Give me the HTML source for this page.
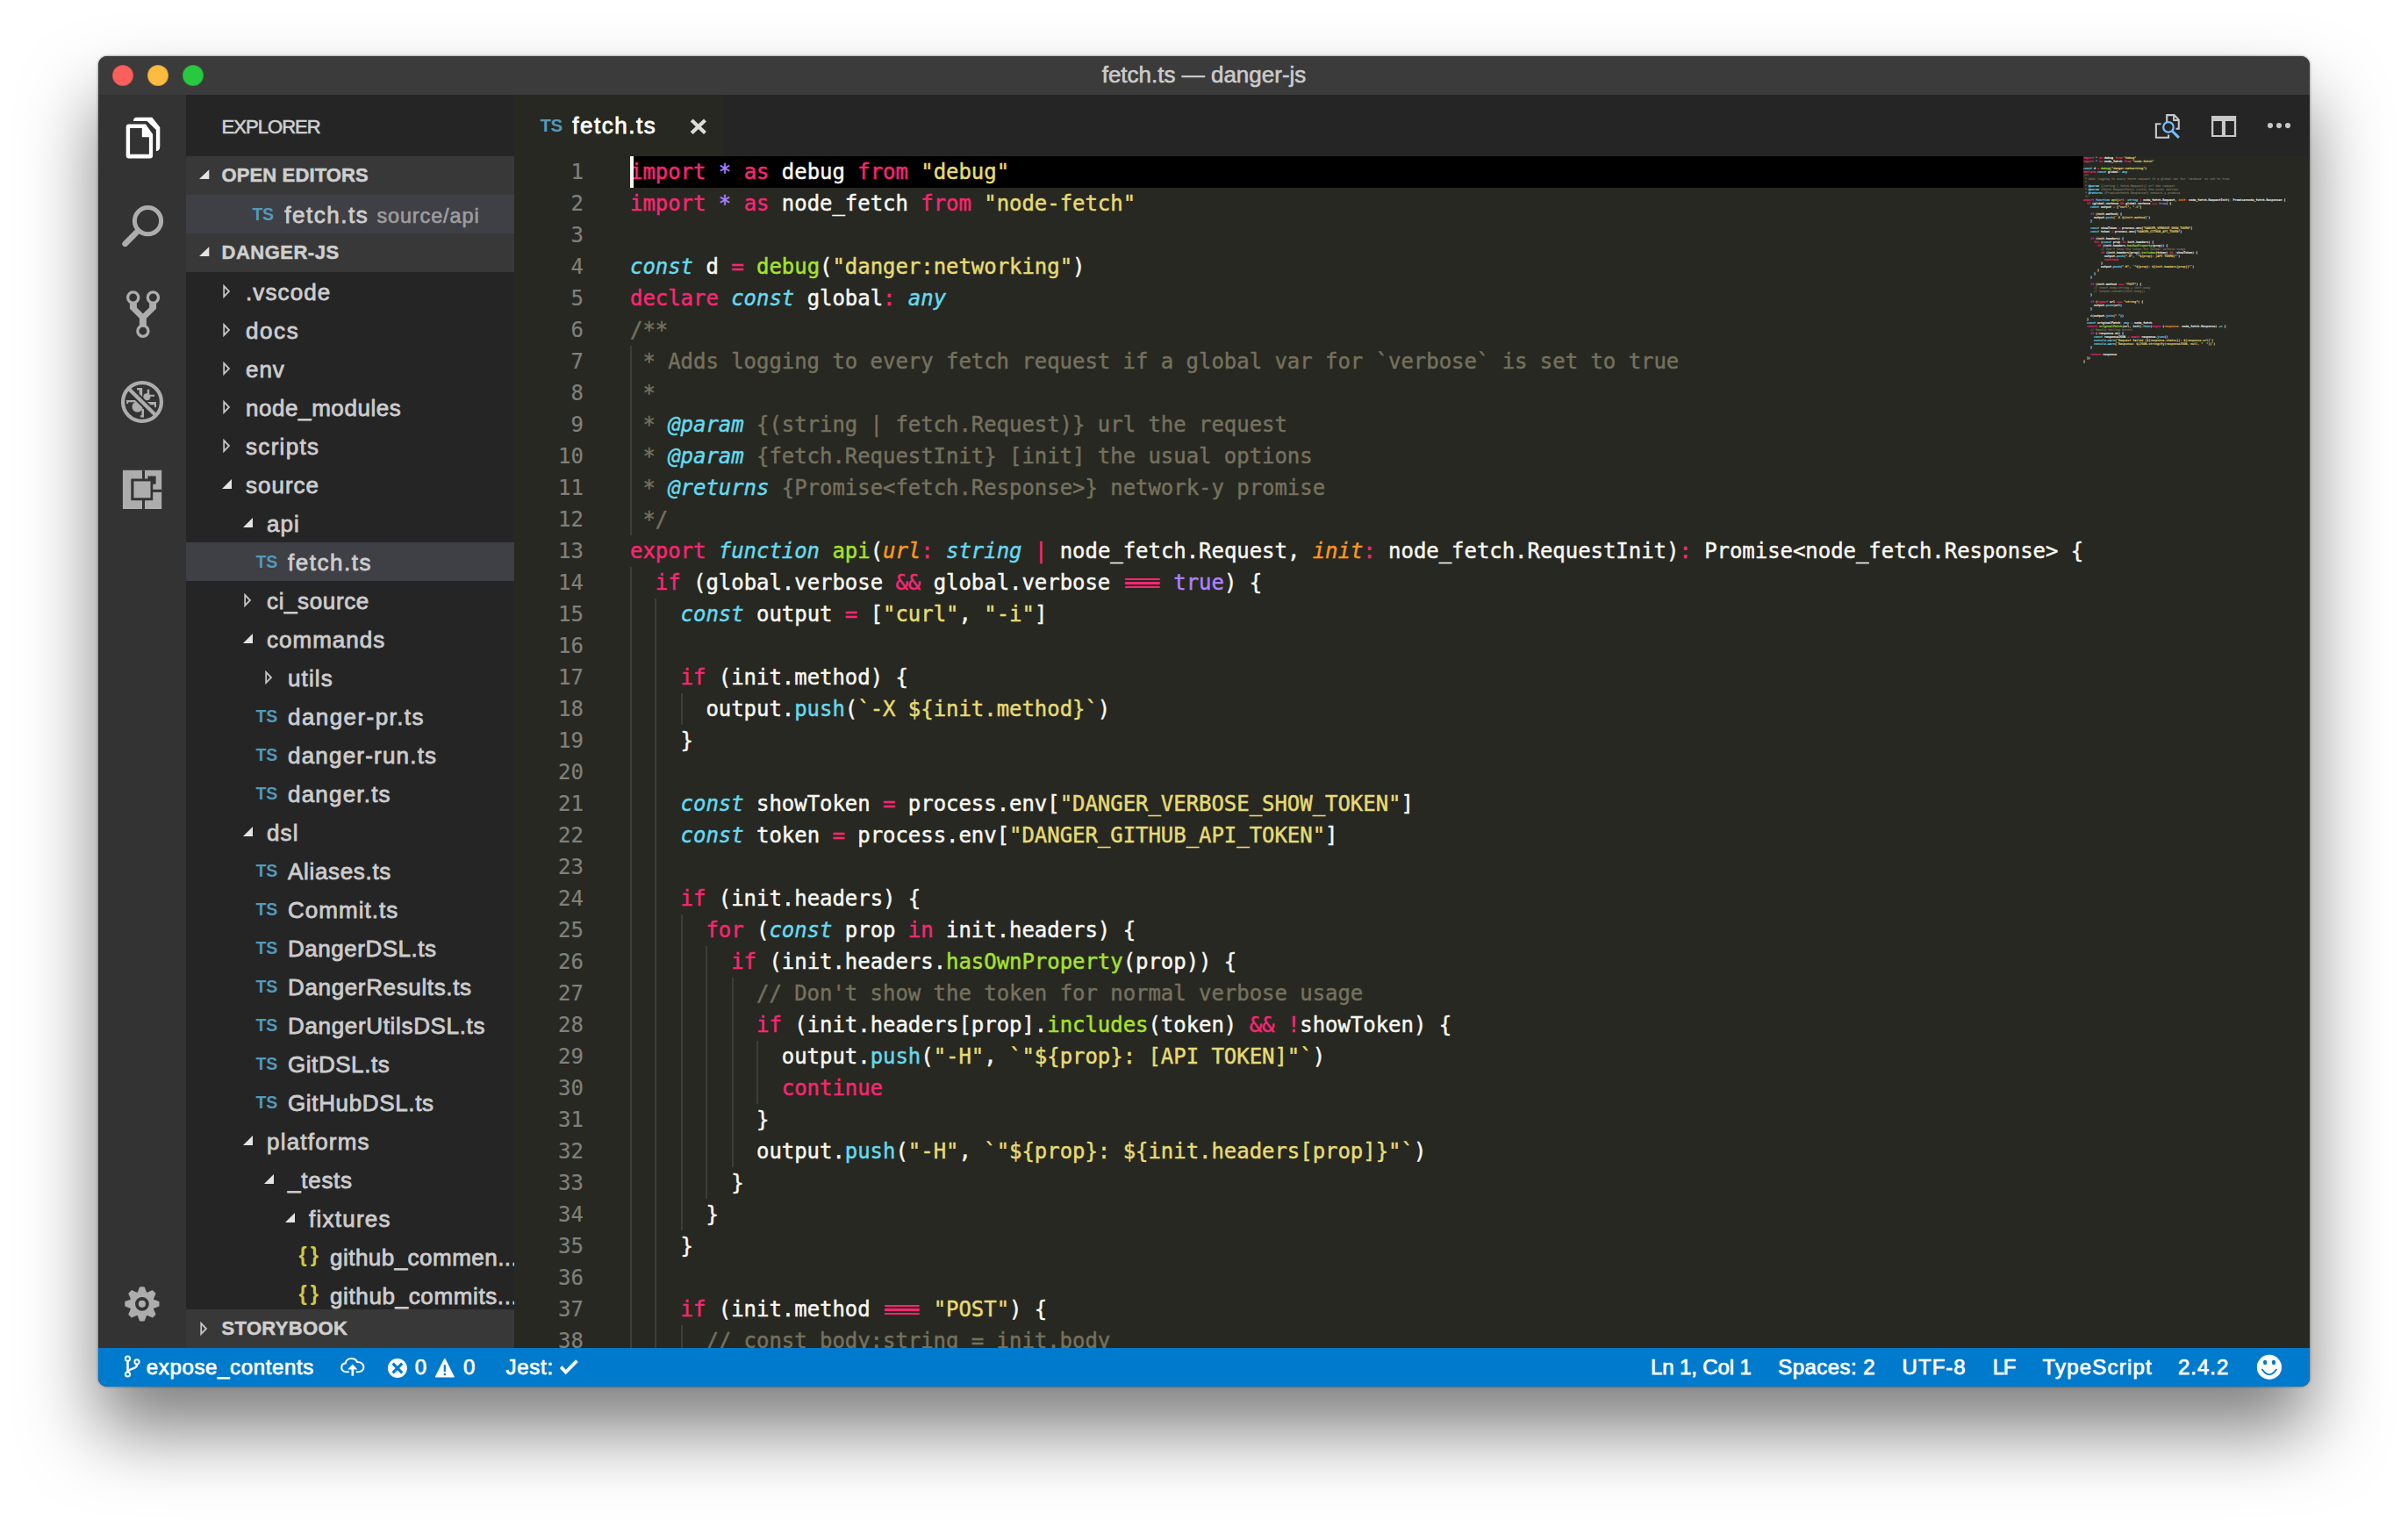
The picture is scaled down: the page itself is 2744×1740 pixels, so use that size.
<!DOCTYPE html>
<html lang="en"><head><meta charset="utf-8"><title>fetch.ts — danger-js</title>
<style>
html,body{margin:0;padding:0}
body{width:2744px;height:1740px;background:#fff;overflow:hidden;position:relative;font-family:"Liberation Sans",sans-serif;}
#win{position:absolute;left:112px;top:64px;width:2520px;height:1516px;border-radius:10px;overflow:hidden;background:#272822;
 box-shadow:0 50px 84px rgba(0,0,0,.5),0 0 3px rgba(0,0,0,.55);}
#win div,#win span,#win svg{position:absolute}
#title{left:0;top:0;width:2520px;height:44px;background:#3b3b3b}
#title .tt{-webkit-text-stroke:.6px;left:0;width:2520px;top:0;text-align:center;font-size:26px;line-height:42px;color:#cbcbcb;white-space:pre}
.tl{width:24px;height:24px;border-radius:50%;top:10px;box-shadow:inset 0 0 0 1px rgba(0,0,0,.14)}
#act{left:0;top:44px;width:100px;height:1428px;background:#333333}
#side{left:100px;top:44px;width:374px;height:1428px;background:#252526;overflow:hidden}
#ed{left:474px;top:44px;width:2046px;height:1428px;background:#272822;overflow:hidden}
#status{-webkit-text-stroke:.75px;left:0;top:1472px;width:2520px;height:44px;background:#007acc;color:#fff;font-size:24px;line-height:44px;white-space:pre}
.hdr{left:0;width:374px;height:44px;background:#383838}
.hdr .l{-webkit-text-stroke:.5px;left:40.5px;top:0;font-weight:700;font-size:22px;line-height:43px;color:#cfcfcf;white-space:pre}
.row{left:0;width:374px;height:44px}
.row .l{-webkit-text-stroke:.8px;top:0;font-size:26px;line-height:46px;color:#cccccc;white-space:pre}
.row .d{-webkit-text-stroke:.7px;top:0;font-size:23.4px;line-height:49px;color:#9c9c9c;white-space:pre}
.sel{background:#3f3f46}
.ts{font-weight:700;color:#519aba;font-size:19.5px;line-height:45px;top:0;white-space:pre;letter-spacing:-.2px}
.js{color:#cbcb41;font-size:23.5px;line-height:41px;top:0;white-space:pre;font-weight:700;letter-spacing:4px}
#tabs{left:0;top:0;width:2046px;height:70px;background:#252526}
#tab{left:0;top:0;width:238px;height:70px;background:#272822}
#tab .l{-webkit-text-stroke:.8px;left:66.3px;top:0;font-size:26px;line-height:70px;color:#fff;white-space:pre}
#code{-webkit-text-stroke:.45px;left:0;top:70px;width:2046px;height:1358px;font-family:"DejaVu Sans Mono","Liberation Mono",monospace;font-size:24px;line-height:36px;color:#f8f8f2}
.ln{-webkit-text-stroke:.2px;left:0;width:79px;text-align:right;color:#80807a;height:36px;white-space:pre}
.cl{left:132px;height:36px;white-space:pre;letter-spacing:-.0487px}
.g{width:2px;height:36px;background:#3e3d36}
.k{color:#f92672}.s{color:#e6db74}.f{color:#a6e22e}.t{color:#66d9ef;font-style:italic}.c{color:#66d9ef}
.p{color:#fd971f;font-style:italic}.n{color:#ae81ff}.m{color:#75715e}
#code span{position:static}
#code .q{display:inline-block;width:43.2px;text-align:center;letter-spacing:-4.2px;text-indent:-4.2px;transform:translateY(-2.3px) scaleX(1.2);text-shadow:0 4.7px 0 #f92672;-webkit-text-stroke:0}
#mini{left:1788px;top:70px;width:240px;font-family:"DejaVu Sans Mono","Liberation Mono",monospace;font-size:3.33px;line-height:4px;color:#f8f8f2;letter-spacing:0;-webkit-text-stroke:.15px}
#mini div{position:static;height:4px;white-space:pre}
#mini span{position:static}
#status span{top:0}
</style></head>
<body>
<div id="win">
<div id="title"><div class="tl" style="left:16px;background:#fc605c"></div><div class="tl" style="left:56px;background:#fdbc40"></div><div class="tl" style="left:96px;background:#28c940"></div><div class="tt" style="">fetch.ts — danger-js</div></div>
<div id="act">
<svg style="left:0;top:0" width="100" height="1428" viewBox="112 108 100 1428">
<path fill="#fff" d="M152 138 Q152 133.8 156.2 133.8 L173.3 133.8 L182.3 145 L182.3 166.5 Q182.3 172.2 177.9 172.2 L177.9 148.1 L167.6 138 Z"/>
<path fill="#fff" fill-rule="evenodd" d="M146.9 141.6 L166 141.6 L174.1 152.9 L174.1 177.2 Q174.1 180.4 170.9 180.4 L146.9 180.4 Q143.7 180.4 143.7 177.2 L143.7 144.8 Q143.7 141.6 146.9 141.6 Z M148.1 146 L161.8 146 L161.8 156.3 L169.9 156.3 L169.9 175.8 L148.1 175.8 Z"/>
<circle cx="168.5" cy="251.7" r="15.1" fill="none" stroke="#adadad" stroke-width="5"/>
<path d="M157.2 263.2 L142.6 277.8" stroke="#adadad" stroke-width="6.6" stroke-linecap="round"/>
<circle cx="151.7" cy="339" r="6.1" fill="none" stroke="#adadad" stroke-width="3.3"/>
<circle cx="174.4" cy="339" r="6.1" fill="none" stroke="#adadad" stroke-width="3.3"/>
<circle cx="162.9" cy="377.2" r="6.1" fill="none" stroke="#adadad" stroke-width="3.3"/>
<path fill="#adadad" d="M147.9 344.6 L155.9 344.6 L155.9 350.5 L162.9 357.5 L170.1 350.5 L170.1 344.6 L178.1 344.6 L178.1 351.7 L166.9 362.8 L166.9 371.6 L158.9 371.6 L158.9 362.8 L147.9 351.7 Z"/>
<circle cx="162" cy="458" r="21.95" fill="none" stroke="#adadad" stroke-width="4.2"/>
<g fill="#adadad" stroke="none"><circle cx="156.6" cy="463.6" r="6.1"/><circle cx="167.3" cy="452.3" r="4"/><rect x="144.2" y="456" width="12" height="2.3"/><rect x="144.2" y="456" width="2" height="4"/><rect x="161.4" y="466" width="2.6" height="9.4"/><rect x="159.9" y="473.2" width="4" height="2.2"/><rect x="158.6" y="442" width="3.6" height="10"/><rect x="156" y="442" width="4" height="2.4"/><rect x="167.8" y="443.7" width="2.4" height="6"/><rect x="170" y="449.8" width="6" height="2"/><rect x="168" y="458" width="10" height="3.4"/><rect x="176" y="458" width="2" height="6.2"/></g>
<path d="M149.2 445.4 L174.8 470.6" stroke="#333" stroke-width="8.4"/>
<path d="M146 442.2 L178 473.8" stroke="#adadad" stroke-width="4.2"/>
<rect x="139.9" y="535.8" width="44.3" height="44.2" fill="#adadad"/>
<g fill="#333"><rect x="162" y="535.8" width="3" height="10"/><rect x="162" y="570" width="3" height="10"/><rect x="174" y="557.8" width="10.3" height="3"/><rect x="149.3" y="545.5" width="24.9" height="24.7"/><rect x="168.5" y="542.5" width="9.1" height="9.2"/></g>
<rect x="152.4" y="548.4" width="19.1" height="18.9" fill="#adadad"/>
<path fill="#adadad" stroke="#adadad" stroke-width="2" stroke-linejoin="round" d="M157.65 1473.14 L159.85 1467.26 L163.95 1467.26 L166.15 1473.14 L167.88 1473.86 L173.59 1471.26 L176.49 1474.16 L173.89 1479.87 L174.61 1481.60 L180.49 1483.80 L180.49 1487.90 L174.61 1490.10 L173.89 1491.83 L176.49 1497.54 L173.59 1500.44 L167.88 1497.84 L166.15 1498.56 L163.95 1504.44 L159.85 1504.44 L157.65 1498.56 L155.92 1497.84 L150.21 1500.44 L147.31 1497.54 L149.91 1491.83 L149.19 1490.10 L143.31 1487.90 L143.31 1483.80 L149.19 1481.60 L149.91 1479.87 L147.31 1474.16 L150.21 1471.26 L155.92 1473.86Z"/>
<circle cx="161.9" cy="1485.85" r="6" fill="none" stroke="#333" stroke-width="3.8"/>
</svg>
</div>
<div id="side">
<span style="-webkit-text-stroke:.6px;left:40.5px;top:0;font-size:22px;line-height:73px;color:#cfcfcf;white-space:pre;letter-spacing:-0.947px;">EXPLORER</span>
<div class="hdr" style="top:70px"><svg style="left:14px;top:14px" width="14" height="14" viewBox="0 0 14 14"><path d="M12.3 1.3 L12.3 12 L1 12 Z" fill="#e4e4e4"/></svg><span class="l" style="letter-spacing:0.131px;">OPEN EDITORS</span></div>
<div class="row sel" style="top:114px"><span class="ts" style="left:75.4px">TS</span><span class="l" style="left:112.3px;letter-spacing:1.525px;">fetch.ts</span><span class="d" style="left:217.4px;letter-spacing:0.92px;">source/api</span></div>
<div class="hdr" style="top:158px"><svg style="left:14px;top:14px" width="14" height="14" viewBox="0 0 14 14"><path d="M12.3 1.3 L12.3 12 L1 12 Z" fill="#e4e4e4"/></svg><span class="l" style="letter-spacing:0.503px;">DANGER-JS</span></div>
<div class="row" style="top:202px"><svg style="left:40px;top:12px" width="14" height="20" viewBox="0 0 14 20"><path d="M3.2 4 L9 10 L3.2 16 Z" fill="none" stroke="#c4c4c4" stroke-width="1.8" stroke-linejoin="miter"/></svg><span class="l" style="left:68px;letter-spacing:1.115px;">.vscode</span></div>
<div class="row" style="top:246px"><svg style="left:40px;top:12px" width="14" height="20" viewBox="0 0 14 20"><path d="M3.2 4 L9 10 L3.2 16 Z" fill="none" stroke="#c4c4c4" stroke-width="1.8" stroke-linejoin="miter"/></svg><span class="l" style="left:68px;letter-spacing:1.593px;">docs</span></div>
<div class="row" style="top:290px"><svg style="left:40px;top:12px" width="14" height="20" viewBox="0 0 14 20"><path d="M3.2 4 L9 10 L3.2 16 Z" fill="none" stroke="#c4c4c4" stroke-width="1.8" stroke-linejoin="miter"/></svg><span class="l" style="left:68px;letter-spacing:0.939px;">env</span></div>
<div class="row" style="top:334px"><svg style="left:40px;top:12px" width="14" height="20" viewBox="0 0 14 20"><path d="M3.2 4 L9 10 L3.2 16 Z" fill="none" stroke="#c4c4c4" stroke-width="1.8" stroke-linejoin="miter"/></svg><span class="l" style="left:68px;letter-spacing:0.566px;">node_modules</span></div>
<div class="row" style="top:378px"><svg style="left:40px;top:12px" width="14" height="20" viewBox="0 0 14 20"><path d="M3.2 4 L9 10 L3.2 16 Z" fill="none" stroke="#c4c4c4" stroke-width="1.8" stroke-linejoin="miter"/></svg><span class="l" style="left:68px;letter-spacing:1.313px;">scripts</span></div>
<div class="row" style="top:422px"><svg style="left:40px;top:12px" width="14" height="20" viewBox="0 0 14 20"><path d="M12 4 L12 15 L1 15 Z" fill="#e4e4e4"/></svg><span class="l" style="left:68px;letter-spacing:0.991px;">source</span></div>
<div class="row" style="top:466px"><svg style="left:64px;top:12px" width="14" height="20" viewBox="0 0 14 20"><path d="M12 4 L12 15 L1 15 Z" fill="#e4e4e4"/></svg><span class="l" style="left:92px;letter-spacing:0.998px;">api</span></div>
<div class="row sel" style="top:510px"><span class="ts" style="left:79.6px">TS</span><span class="l" style="left:116px;letter-spacing:1.525px;">fetch.ts</span></div>
<div class="row" style="top:554px"><svg style="left:64px;top:12px" width="14" height="20" viewBox="0 0 14 20"><path d="M3.2 4 L9 10 L3.2 16 Z" fill="none" stroke="#c4c4c4" stroke-width="1.8" stroke-linejoin="miter"/></svg><span class="l" style="left:92px;letter-spacing:0.627px;">ci_source</span></div>
<div class="row" style="top:598px"><svg style="left:64px;top:12px" width="14" height="20" viewBox="0 0 14 20"><path d="M12 4 L12 15 L1 15 Z" fill="#e4e4e4"/></svg><span class="l" style="left:92px;letter-spacing:1.021px;">commands</span></div>
<div class="row" style="top:642px"><svg style="left:88px;top:12px" width="14" height="20" viewBox="0 0 14 20"><path d="M3.2 4 L9 10 L3.2 16 Z" fill="none" stroke="#c4c4c4" stroke-width="1.8" stroke-linejoin="miter"/></svg><span class="l" style="left:116px;letter-spacing:1.112px;">utils</span></div>
<div class="row" style="top:686px"><span class="ts" style="left:79.6px">TS</span><span class="l" style="left:116px;letter-spacing:1.432px;">danger-pr.ts</span></div>
<div class="row" style="top:730px"><span class="ts" style="left:79.6px">TS</span><span class="l" style="left:116px;letter-spacing:1.204px;">danger-run.ts</span></div>
<div class="row" style="top:774px"><span class="ts" style="left:79.6px">TS</span><span class="l" style="left:116px;letter-spacing:1.202px;">danger.ts</span></div>
<div class="row" style="top:818px"><svg style="left:64px;top:12px" width="14" height="20" viewBox="0 0 14 20"><path d="M12 4 L12 15 L1 15 Z" fill="#e4e4e4"/></svg><span class="l" style="left:92px;letter-spacing:1.125px;">dsl</span></div>
<div class="row" style="top:862px"><span class="ts" style="left:79.6px">TS</span><span class="l" style="left:116px;letter-spacing:0.67px;">Aliases.ts</span></div>
<div class="row" style="top:906px"><span class="ts" style="left:79.6px">TS</span><span class="l" style="left:116px;letter-spacing:1.038px;">Commit.ts</span></div>
<div class="row" style="top:950px"><span class="ts" style="left:79.6px">TS</span><span class="l" style="left:116px;letter-spacing:0.526px;">DangerDSL.ts</span></div>
<div class="row" style="top:994px"><span class="ts" style="left:79.6px">TS</span><span class="l" style="left:116px;letter-spacing:0.645px;">DangerResults.ts</span></div>
<div class="row" style="top:1038px"><span class="ts" style="left:79.6px">TS</span><span class="l" style="left:116px;letter-spacing:0.665px;">DangerUtilsDSL.ts</span></div>
<div class="row" style="top:1082px"><span class="ts" style="left:79.6px">TS</span><span class="l" style="left:116px;letter-spacing:0.556px;">GitDSL.ts</span></div>
<div class="row" style="top:1126px"><span class="ts" style="left:79.6px">TS</span><span class="l" style="left:116px;letter-spacing:0.65px;">GitHubDSL.ts</span></div>
<div class="row" style="top:1170px"><svg style="left:64px;top:12px" width="14" height="20" viewBox="0 0 14 20"><path d="M12 4 L12 15 L1 15 Z" fill="#e4e4e4"/></svg><span class="l" style="left:92px;letter-spacing:1.21px;">platforms</span></div>
<div class="row" style="top:1214px"><svg style="left:88px;top:12px" width="14" height="20" viewBox="0 0 14 20"><path d="M12 4 L12 15 L1 15 Z" fill="#e4e4e4"/></svg><span class="l" style="left:116px;letter-spacing:0.745px;">_tests</span></div>
<div class="row" style="top:1258px"><svg style="left:112px;top:12px" width="14" height="20" viewBox="0 0 14 20"><path d="M12 4 L12 15 L1 15 Z" fill="#e4e4e4"/></svg><span class="l" style="left:140px;letter-spacing:1.241px;">fixtures</span></div>
<div class="row" style="top:1302px"><span class="js" style="left:128.5px">{}</span><span class="l" style="left:164px;letter-spacing:0.475px;">github_commen...</span></div>
<div class="row" style="top:1346px"><span class="js" style="left:128.5px">{}</span><span class="l" style="left:164px;letter-spacing:0.628px;">github_commits...</span></div>
<div class="hdr" style="top:1384px"><svg style="left:14px;top:12px" width="14" height="20" viewBox="0 0 14 20"><path d="M3.2 4 L9 10 L3.2 16 Z" fill="none" stroke="#c4c4c4" stroke-width="1.8"/></svg><span class="l" style="letter-spacing:0.34px;">STORYBOOK</span></div>
</div>
<div id="ed">
<div id="tabs"></div><div id="tab"><span class="ts" style="left:29.6px;font-size:20.5px;line-height:69px;letter-spacing:-.6px">TS</span><span class="l" style="letter-spacing:1.525px;">fetch.ts</span><svg style="left:198px;top:24px" width="24" height="24" viewBox="784 132 24 24"><path d="M788.2 136.9 L803.5 151.6 M803.5 136.9 L788.2 151.6" stroke="#dcdcdc" stroke-width="4.2"/></svg></div>
<svg style="left:1844px;top:12px" width="200" height="48" viewBox="2430 120 200 48">
<path fill="none" stroke="#c8c8c8" stroke-width="2.1" d="M2469.2 139 L2469.2 131.1 L2477.6 131.1 L2482.8 136.6 L2482.8 146.8 L2479.5 146.8 M2477.2 131.3 L2477.2 137 L2482.6 137"/>
<path fill="none" stroke="#c8c8c8" stroke-width="2.1" d="M2462.5 141.3 L2456.9 141.3 L2456.9 156.8 L2471.1 156.8 L2471.1 153.5"/>
<circle cx="2471" cy="144.9" r="5.8" fill="none" stroke="#75beff" stroke-width="2.3"/>
<path d="M2475.2 149.3 L2482.9 156.9" stroke="#75beff" stroke-width="3" />
<path fill="#c8c8c8" fill-rule="evenodd" d="M2520 132 H2548.2 V156 H2520 Z M2522.3 138 V153.9 H2531.9 V138 Z M2536 138 V153.9 H2545.9 V138 Z"/>
<circle cx="2587" cy="143.1" r="3.05" fill="#c8c8c8"/>
<circle cx="2597" cy="143.1" r="3.05" fill="#c8c8c8"/>
<circle cx="2607" cy="143.1" r="3.05" fill="#c8c8c8"/>
</svg>
<div id="code">
<div style="left:132px;top:0;width:1656px;height:36px;background:#000"></div>
<div class="ln" style="top:0px">1</div>
<div class="cl" style="top:0px"><span class="k">import</span> <span class="n">*</span> <span class="k">as</span> debug <span class="k">from</span> <span class="s">"debug"</span></div>
<div class="ln" style="top:36px">2</div>
<div class="cl" style="top:36px"><span class="k">import</span> <span class="n">*</span> <span class="k">as</span> node_fetch <span class="k">from</span> <span class="s">"node-fetch"</span></div>
<div class="ln" style="top:72px">3</div>
<div class="ln" style="top:108px">4</div>
<div class="cl" style="top:108px"><span class="t">const</span> d <span class="k">=</span> <span class="f">debug</span>(<span class="s">"danger:networking"</span>)</div>
<div class="ln" style="top:144px">5</div>
<div class="cl" style="top:144px"><span class="k">declare</span> <span class="t">const</span> global<span class="k">:</span> <span class="t">any</span></div>
<div class="ln" style="top:180px">6</div>
<div class="cl" style="top:180px"><span class="m">/**</span></div>
<div class="ln" style="top:216px">7</div>
<div class="g" style="left:132px;top:216px"></div>
<div class="cl" style="top:216px"><span class="m"> * Adds logging to every fetch request if a global var for `verbose` is set to true</span></div>
<div class="ln" style="top:252px">8</div>
<div class="g" style="left:132px;top:252px"></div>
<div class="cl" style="top:252px"><span class="m"> *</span></div>
<div class="ln" style="top:288px">9</div>
<div class="g" style="left:132px;top:288px"></div>
<div class="cl" style="top:288px"><span class="m"> * </span><span class="t">@param</span><span class="m"> {(string | fetch.Request)} url the request</span></div>
<div class="ln" style="top:324px">10</div>
<div class="g" style="left:132px;top:324px"></div>
<div class="cl" style="top:324px"><span class="m"> * </span><span class="t">@param</span><span class="m"> {fetch.RequestInit} [init] the usual options</span></div>
<div class="ln" style="top:360px">11</div>
<div class="g" style="left:132px;top:360px"></div>
<div class="cl" style="top:360px"><span class="m"> * </span><span class="t">@returns</span><span class="m"> {Promise&lt;fetch.Response&gt;} network-y promise</span></div>
<div class="ln" style="top:396px">12</div>
<div class="g" style="left:132px;top:396px"></div>
<div class="cl" style="top:396px"><span class="m"> */</span></div>
<div class="ln" style="top:432px">13</div>
<div class="cl" style="top:432px"><span class="k">export</span> <span class="t">function</span> <span class="f">api</span>(<span class="p">url</span><span class="k">:</span> <span class="t">string</span> <span class="k">|</span> node_fetch.Request, <span class="p">init</span><span class="k">:</span> node_fetch.RequestInit)<span class="k">:</span> Promise&lt;node_fetch.Response&gt; {</div>
<div class="ln" style="top:468px">14</div>
<div class="g" style="left:132px;top:468px"></div>
<div class="cl" style="top:468px">  <span class="k">if</span> (global.verbose <span class="k">&amp;&amp;</span> global.verbose <span class="k q">===</span> <span class="n">true</span>) {</div>
<div class="ln" style="top:504px">15</div>
<div class="g" style="left:132px;top:504px"></div>
<div class="g" style="left:160px;top:504px"></div>
<div class="cl" style="top:504px">    <span class="t">const</span> output <span class="k">=</span> [<span class="s">"curl"</span>, <span class="s">"-i"</span>]</div>
<div class="ln" style="top:540px">16</div>
<div class="g" style="left:132px;top:540px"></div>
<div class="g" style="left:160px;top:540px"></div>
<div class="ln" style="top:576px">17</div>
<div class="g" style="left:132px;top:576px"></div>
<div class="g" style="left:160px;top:576px"></div>
<div class="cl" style="top:576px">    <span class="k">if</span> (init.method) {</div>
<div class="ln" style="top:612px">18</div>
<div class="g" style="left:132px;top:612px"></div>
<div class="g" style="left:160px;top:612px"></div>
<div class="g" style="left:190px;top:612px"></div>
<div class="cl" style="top:612px">      output.<span class="c">push</span>(<span class="s">`-X ${init.method}`</span>)</div>
<div class="ln" style="top:648px">19</div>
<div class="g" style="left:132px;top:648px"></div>
<div class="g" style="left:160px;top:648px"></div>
<div class="cl" style="top:648px">    }</div>
<div class="ln" style="top:684px">20</div>
<div class="g" style="left:132px;top:684px"></div>
<div class="g" style="left:160px;top:684px"></div>
<div class="ln" style="top:720px">21</div>
<div class="g" style="left:132px;top:720px"></div>
<div class="g" style="left:160px;top:720px"></div>
<div class="cl" style="top:720px">    <span class="t">const</span> showToken <span class="k">=</span> process.env[<span class="s">"DANGER_VERBOSE_SHOW_TOKEN"</span>]</div>
<div class="ln" style="top:756px">22</div>
<div class="g" style="left:132px;top:756px"></div>
<div class="g" style="left:160px;top:756px"></div>
<div class="cl" style="top:756px">    <span class="t">const</span> token <span class="k">=</span> process.env[<span class="s">"DANGER_GITHUB_API_TOKEN"</span>]</div>
<div class="ln" style="top:792px">23</div>
<div class="g" style="left:132px;top:792px"></div>
<div class="g" style="left:160px;top:792px"></div>
<div class="ln" style="top:828px">24</div>
<div class="g" style="left:132px;top:828px"></div>
<div class="g" style="left:160px;top:828px"></div>
<div class="cl" style="top:828px">    <span class="k">if</span> (init.headers) {</div>
<div class="ln" style="top:864px">25</div>
<div class="g" style="left:132px;top:864px"></div>
<div class="g" style="left:160px;top:864px"></div>
<div class="g" style="left:190px;top:864px"></div>
<div class="cl" style="top:864px">      <span class="k">for</span> (<span class="t">const</span> prop <span class="k">in</span> init.headers) {</div>
<div class="ln" style="top:900px">26</div>
<div class="g" style="left:132px;top:900px"></div>
<div class="g" style="left:160px;top:900px"></div>
<div class="g" style="left:190px;top:900px"></div>
<div class="g" style="left:218px;top:900px"></div>
<div class="cl" style="top:900px">        <span class="k">if</span> (init.headers.<span class="f">hasOwnProperty</span>(prop)) {</div>
<div class="ln" style="top:936px">27</div>
<div class="g" style="left:132px;top:936px"></div>
<div class="g" style="left:160px;top:936px"></div>
<div class="g" style="left:190px;top:936px"></div>
<div class="g" style="left:218px;top:936px"></div>
<div class="g" style="left:248px;top:936px"></div>
<div class="cl" style="top:936px">          <span class="m">// Don't show the token for normal verbose usage</span></div>
<div class="ln" style="top:972px">28</div>
<div class="g" style="left:132px;top:972px"></div>
<div class="g" style="left:160px;top:972px"></div>
<div class="g" style="left:190px;top:972px"></div>
<div class="g" style="left:218px;top:972px"></div>
<div class="g" style="left:248px;top:972px"></div>
<div class="cl" style="top:972px">          <span class="k">if</span> (init.headers[prop].<span class="f">includes</span>(token) <span class="k">&amp;&amp;</span> <span class="k">!</span>showToken) {</div>
<div class="ln" style="top:1008px">29</div>
<div class="g" style="left:132px;top:1008px"></div>
<div class="g" style="left:160px;top:1008px"></div>
<div class="g" style="left:190px;top:1008px"></div>
<div class="g" style="left:218px;top:1008px"></div>
<div class="g" style="left:248px;top:1008px"></div>
<div class="g" style="left:276px;top:1008px"></div>
<div class="cl" style="top:1008px">            output.<span class="c">push</span>(<span class="s">"-H"</span>, <span class="s">`"${prop}: [API TOKEN]"`</span>)</div>
<div class="ln" style="top:1044px">30</div>
<div class="g" style="left:132px;top:1044px"></div>
<div class="g" style="left:160px;top:1044px"></div>
<div class="g" style="left:190px;top:1044px"></div>
<div class="g" style="left:218px;top:1044px"></div>
<div class="g" style="left:248px;top:1044px"></div>
<div class="g" style="left:276px;top:1044px"></div>
<div class="cl" style="top:1044px">            <span class="k">continue</span></div>
<div class="ln" style="top:1080px">31</div>
<div class="g" style="left:132px;top:1080px"></div>
<div class="g" style="left:160px;top:1080px"></div>
<div class="g" style="left:190px;top:1080px"></div>
<div class="g" style="left:218px;top:1080px"></div>
<div class="g" style="left:248px;top:1080px"></div>
<div class="cl" style="top:1080px">          }</div>
<div class="ln" style="top:1116px">32</div>
<div class="g" style="left:132px;top:1116px"></div>
<div class="g" style="left:160px;top:1116px"></div>
<div class="g" style="left:190px;top:1116px"></div>
<div class="g" style="left:218px;top:1116px"></div>
<div class="g" style="left:248px;top:1116px"></div>
<div class="cl" style="top:1116px">          output.<span class="c">push</span>(<span class="s">"-H"</span>, <span class="s">`"${prop}: ${init.headers[prop]}"`</span>)</div>
<div class="ln" style="top:1152px">33</div>
<div class="g" style="left:132px;top:1152px"></div>
<div class="g" style="left:160px;top:1152px"></div>
<div class="g" style="left:190px;top:1152px"></div>
<div class="g" style="left:218px;top:1152px"></div>
<div class="cl" style="top:1152px">        }</div>
<div class="ln" style="top:1188px">34</div>
<div class="g" style="left:132px;top:1188px"></div>
<div class="g" style="left:160px;top:1188px"></div>
<div class="g" style="left:190px;top:1188px"></div>
<div class="cl" style="top:1188px">      }</div>
<div class="ln" style="top:1224px">35</div>
<div class="g" style="left:132px;top:1224px"></div>
<div class="g" style="left:160px;top:1224px"></div>
<div class="cl" style="top:1224px">    }</div>
<div class="ln" style="top:1260px">36</div>
<div class="g" style="left:132px;top:1260px"></div>
<div class="g" style="left:160px;top:1260px"></div>
<div class="ln" style="top:1296px">37</div>
<div class="g" style="left:132px;top:1296px"></div>
<div class="g" style="left:160px;top:1296px"></div>
<div class="cl" style="top:1296px">    <span class="k">if</span> (init.method <span class="k q">===</span> <span class="s">"POST"</span>) {</div>
<div class="ln" style="top:1332px">38</div>
<div class="g" style="left:132px;top:1332px"></div>
<div class="g" style="left:160px;top:1332px"></div>
<div class="g" style="left:190px;top:1332px"></div>
<div class="cl" style="top:1332px">      <span class="m">// const body:string = init.body</span></div>
<div style="left:132px;top:0;width:4px;height:36px;background:#f8f8f0"></div>
</div>
<div id="mini">
<div><span class="k">import</span> <span class="n">*</span> <span class="k">as</span> debug <span class="k">from</span> <span class="s">"debug"</span></div>
<div><span class="k">import</span> <span class="n">*</span> <span class="k">as</span> node_fetch <span class="k">from</span> <span class="s">"node-fetch"</span></div>
<div></div>
<div><span class="t">const</span> d <span class="k">=</span> <span class="f">debug</span>(<span class="s">"danger:networking"</span>)</div>
<div><span class="k">declare</span> <span class="t">const</span> global<span class="k">:</span> <span class="t">any</span></div>
<div><span class="m">/**</span></div>
<div><span class="m"> * Adds logging to every fetch request if a global var for `verbose` is set to true</span></div>
<div><span class="m"> *</span></div>
<div><span class="m"> * </span><span class="t">@param</span><span class="m"> {(string | fetch.Request)} url the request</span></div>
<div><span class="m"> * </span><span class="t">@param</span><span class="m"> {fetch.RequestInit} [init] the usual options</span></div>
<div><span class="m"> * </span><span class="t">@returns</span><span class="m"> {Promise&lt;fetch.Response&gt;} network-y promise</span></div>
<div><span class="m"> */</span></div>
<div><span class="k">export</span> <span class="t">function</span> <span class="f">api</span>(<span class="p">url</span><span class="k">:</span> <span class="t">string</span> <span class="k">|</span> node_fetch.Request, <span class="p">init</span><span class="k">:</span> node_fetch.RequestInit)<span class="k">:</span> Promise&lt;node_fetch.Response&gt; {</div>
<div>  <span class="k">if</span> (global.verbose <span class="k">&amp;&amp;</span> global.verbose <span class="k q">===</span> <span class="n">true</span>) {</div>
<div>    <span class="t">const</span> output <span class="k">=</span> [<span class="s">"curl"</span>, <span class="s">"-i"</span>]</div>
<div></div>
<div>    <span class="k">if</span> (init.method) {</div>
<div>      output.<span class="c">push</span>(<span class="s">`-X ${init.method}`</span>)</div>
<div>    }</div>
<div></div>
<div>    <span class="t">const</span> showToken <span class="k">=</span> process.env[<span class="s">"DANGER_VERBOSE_SHOW_TOKEN"</span>]</div>
<div>    <span class="t">const</span> token <span class="k">=</span> process.env[<span class="s">"DANGER_GITHUB_API_TOKEN"</span>]</div>
<div></div>
<div>    <span class="k">if</span> (init.headers) {</div>
<div>      <span class="k">for</span> (<span class="t">const</span> prop <span class="k">in</span> init.headers) {</div>
<div>        <span class="k">if</span> (init.headers.<span class="f">hasOwnProperty</span>(prop)) {</div>
<div>          <span class="m">// Don't show the token for normal verbose usage</span></div>
<div>          <span class="k">if</span> (init.headers[prop].<span class="f">includes</span>(token) <span class="k">&amp;&amp;</span> <span class="k">!</span>showToken) {</div>
<div>            output.<span class="c">push</span>(<span class="s">"-H"</span>, <span class="s">`"${prop}: [API TOKEN]"`</span>)</div>
<div>            <span class="k">continue</span></div>
<div>          }</div>
<div>          output.<span class="c">push</span>(<span class="s">"-H"</span>, <span class="s">`"${prop}: ${init.headers[prop]}"`</span>)</div>
<div>        }</div>
<div>      }</div>
<div>    }</div>
<div></div>
<div>    <span class="k">if</span> (init.method <span class="k q">===</span> <span class="s">"POST"</span>) {</div>
<div>      <span class="m">// const body:string = init.body</span></div>
<div>      <span class="m">// output.concat([init.body])</span></div>
<div>    }</div>
<div></div>
<div>    <span class="k">if</span> (<span class="k">typeof</span> url <span class="k q">===</span> <span class="s">"string"</span>) {</div>
<div>      output.<span class="c">push</span>(url)</div>
<div>    }</div>
<div></div>
<div>    <span class="f">d</span>(output.<span class="c">join</span>(<span class="s">" "</span>))</div>
<div>  }</div>
<div>  <span class="t">const</span> originalFetch<span class="k">:</span> <span class="t">any</span> <span class="k">=</span> node_fetch</div>
<div>  <span class="k">return</span> <span class="f">originalFetch</span>(url, init).<span class="c">then</span>(<span class="k">async</span> (<span class="p">response</span><span class="k">:</span> node_fetch.Response) <span class="t">=&gt;</span> {</div>
<div>    <span class="m">// Handle failing errors</span></div>
<div>    <span class="k">if</span> (<span class="k">!</span>response.ok) {</div>
<div>      <span class="t">const</span> responseJSON <span class="k">=</span> <span class="k">await</span> response.<span class="c">json</span>()</div>
<div>      <span class="c">console</span>.<span class="c">warn</span>(<span class="s">`Request failed [${response.status}]: ${response.url}`</span>)</div>
<div>      <span class="c">console</span>.<span class="c">warn</span>(<span class="s">`Response: ${JSON.stringify(responseJSON, null, "  ")}`</span>)</div>
<div>    }</div>
<div></div>
<div>    <span class="k">return</span> response</div>
<div>  })</div>
<div>}</div>
</div>
</div>
<div id="status">
<span style="left:54.8px;letter-spacing:0.645px;">expose_contents</span>
<span style="left:360.7px;letter-spacing:0.141px;">0</span>
<span style="left:416.1px;letter-spacing:0.141px;">0</span>
<span style="left:464.5px;letter-spacing:0.753px;">Jest:</span>
<span style="left:1768.9px;letter-spacing:-0.108px;">Ln 1, Col 1</span>
<span style="left:1914.3px;letter-spacing:0.446px;">Spaces: 2</span>
<span style="left:2055.6px;letter-spacing:1.025px;">UTF-8</span>
<span style="left:2158.8px;letter-spacing:-1.516px;">LF</span>
<span style="left:2215.6px;letter-spacing:1.179px;">TypeScript</span>
<span style="left:2369.9px;letter-spacing:1.027px;">2.4.2</span>
<svg style="left:0;top:0" width="2520" height="44" viewBox="112 1536 2520 44">
<g fill="none" stroke="#fff" stroke-width="2"><circle cx="145.5" cy="1548.2" r="2.6"/><circle cx="156" cy="1551.8" r="2.6"/><circle cx="145.5" cy="1566" r="2.6"/><path d="M145.5 1551 V1563.2" stroke-width="2.6"/><path d="M156 1554.6 V1555.6 C156 1560.8 146 1558.4 145.6 1564" stroke-width="2.4"/></g>
<path fill="none" stroke="#fff" stroke-width="2.1" stroke-linejoin="round" stroke-linecap="round" d="M397 1563.2 H394.8 C391.4 1563.2 389.2 1561 389.2 1558.2 C389.2 1555.5 391.2 1553.6 393.8 1553.4 C394 1550.2 397 1548 400.4 1548 C403.6 1548 406 1549.6 407 1552 C411.2 1551.8 414.4 1554.2 414.4 1557.8 C414.4 1561 411.8 1563.2 408.6 1563.2 H406.6"/>
<path fill="#fff" d="M401.8 1554.6 L407.4 1560.6 L403.1 1560.6 L403.1 1567.8 L400.5 1567.8 L400.5 1560.6 L396.2 1560.6 Z"/>
<circle cx="452.9" cy="1559" r="11" fill="#fff"/>
<path d="M447.6 1553.7 L458.2 1564.3 M458.2 1553.7 L447.6 1564.3" stroke="#007acc" stroke-width="3.2"/>
<path fill="#fff" stroke="#fff" stroke-width="1.6" stroke-linejoin="round" d="M506.8 1548.6 L517 1568.8 L496.7 1568.8 Z"/>
<rect x="505.7" y="1555.2" width="2.2" height="8" fill="#007acc"/><rect x="505.7" y="1564.8" width="2.2" height="2.4" fill="#007acc"/>
<path fill="none" stroke="#fff" stroke-width="3.8" d="M639.2 1557.6 L644.8 1563.6 L657.4 1550.6"/>
<circle cx="2585.9" cy="1557.9" r="14.1" fill="#fff"/>
<ellipse cx="2581.1" cy="1552.4" rx="2.1" ry="2.7" fill="#007acc"/><ellipse cx="2591" cy="1552.4" rx="2.1" ry="2.7" fill="#007acc"/>
<path d="M2577.8 1560.6 Q2585.9 1572.2 2594 1560.6" fill="none" stroke="#007acc" stroke-width="1.8" stroke-linecap="round"/>
</svg>
</div>
</div>
</body></html>
